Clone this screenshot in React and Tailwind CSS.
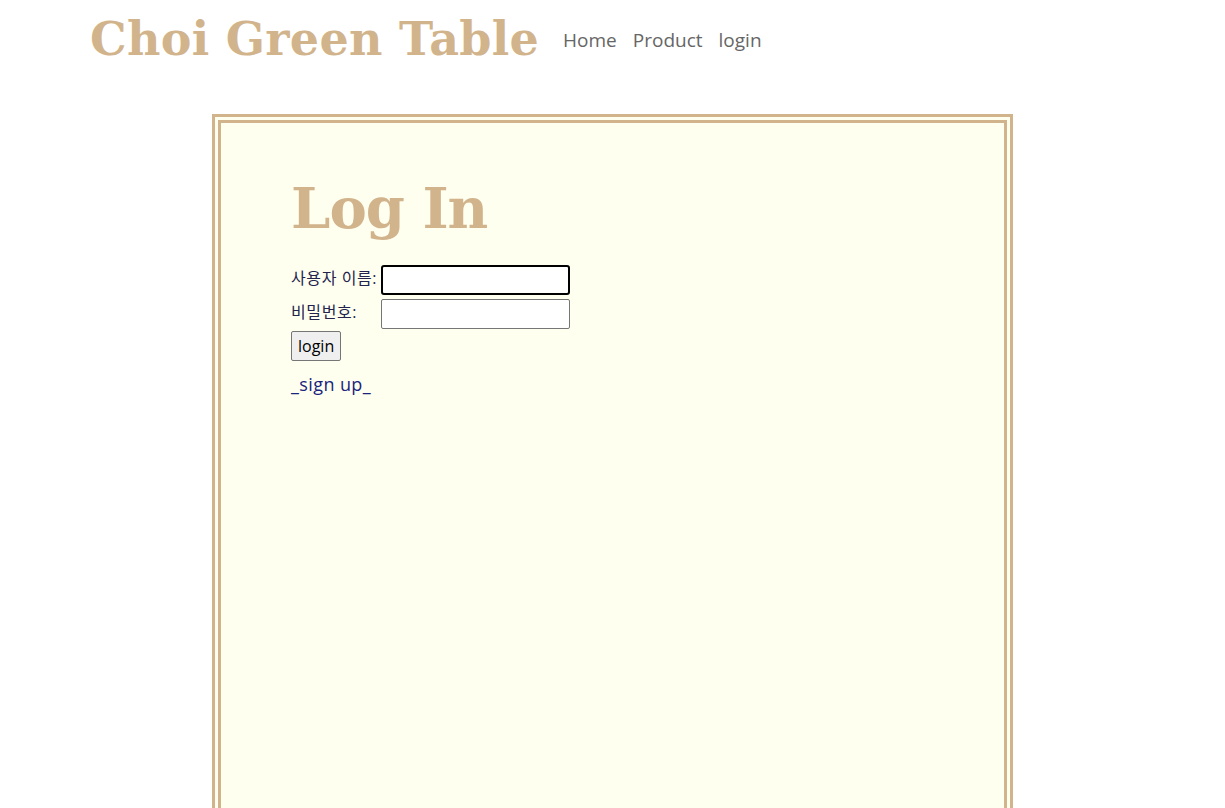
import React from "react";

const App = () => {
  return (
    <div className="min-h-screen bg-white font-['Open_Sans','Noto_Sans_CJK_KR',sans-serif]">
      {/* header */}
      <header className="flex items-center h-[80px] pl-[90px] pb-[2px]">
        <h1 className="font-['DejaVu_Serif',serif] font-bold text-[46px] leading-none tracking-[0.3px] text-[#d2b48c]">
          Choi Green Table
        </h1>
        <nav className="flex gap-4 ml-[24px] text-[19px] text-[#666] mt-[2px]">
          <a href="#">Home</a>
          <a href="#">Product</a>
          <a href="#">login</a>
        </nav>
      </header>

      <div className="mt-[34px] mx-auto w-[801px] h-[780px] border-[9px] border-double border-[#d2b48c] bg-[#fffff0] pl-[70px] pt-[57px]">
        <h2 className="font-['DejaVu_Serif',serif] font-bold text-[56px] leading-none tracking-[-1px] text-[#d2b48c] mb-[29px]">
          Log In
        </h2>
        <form className="flex flex-col text-[16px] text-[#23234d]">
          <div className="flex items-center h-[30px]">
            <label className="w-[90px] -mt-1 tracking-[0.6px] whitespace-nowrap">사용자 이름:</label>
            <input
              type="text"
              className="w-[189px] h-[30px] bg-white border-2 border-black rounded-[3px] outline-none"
            />
          </div>
          <div className="flex items-center h-[30px] mt-[4px]">
            <label className="w-[90px] -mt-1 tracking-[0.6px]">비밀번호:</label>
            <input
              type="password"
              className="w-[189px] h-[30px] bg-white border border-[#767676] rounded-[2px] outline-none"
            />
          </div>
          <div className="mt-[2px]">
            <button
              type="button"
              className="h-[30px] px-[6px] bg-[#efefef] border border-[#767676] rounded-[2px] text-[16px] text-black"
            >
              login
            </button>
          </div>
          <a href="#" className="mt-[10px] text-[18px] tracking-[0.4px] text-[#1a237e]">
            _sign up_
          </a>
        </form>
      </div>
    </div>
  );
};

export default App;
